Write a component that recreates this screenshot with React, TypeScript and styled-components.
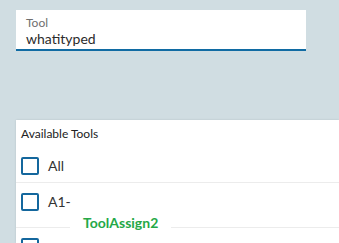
import React from "react";
import styled, { createGlobalStyle } from "styled-components";

const Global = createGlobalStyle`
  html, body { margin: 0; padding: 0; }
  body {
    background: #d0dde2;
    font-family: Lato, "Open Sans", sans-serif;
    overflow: hidden;
  }
`;

const Page = styled.div`
  display: flex;
  flex-direction: column;
  padding-top: 10px;
  padding-left: 16px;
  height: 243px;
  box-sizing: border-box;
  overflow: hidden;
`;

const Field = styled.div`
  width: 290px;
  box-sizing: border-box;
  background: #ffffff;
  border-bottom: 2px solid #106ba3;
  padding: 6px 10px 2px;
  display: flex;
  flex-direction: column;
`;

const FieldLabel = styled.span`
  font-size: 12px;
  line-height: 14px;
  color: #6f6f6f;
`;

const FieldValue = styled.span`
  font-size: 14px;
  line-height: 17px;
  color: #2b2b2b;
`;

const Panel = styled.div`
  margin-top: 69px;
  background: #ffffff;
  box-shadow: 0 0 2px rgba(0, 0, 0, 0.12);
  flex: 1;
  min-height: 0;
  overflow: hidden;
  display: flex;
  flex-direction: column;
`;

const PanelTitle = styled.div`
  font-size: 12px;
  line-height: 16px;
  color: #222;
  padding: 6px 5px 0;
`;

const Row = styled.div<{ $top: number; $bottom: number }>`
  display: flex;
  align-items: center;
  gap: 9px;
  flex-shrink: 0;
  padding: ${(p) => p.$top}px 5px ${(p) => p.$bottom}px;
  border-bottom: 1px solid #ececec;
  font-size: 14px;
  line-height: 18px;
  color: #333;
`;

const Box = styled.span`
  width: 18px;
  height: 18px;
  box-sizing: border-box;
  border: 2px solid #14679d;
  border-radius: 2px;
  flex-shrink: 0;
`;

const Watermark = styled.div`
  position: fixed;
  left: 70px;
  bottom: 0;
  background: #ffffff;
  padding: 6px 13px 12px;
  font-size: 14px;
  line-height: 17px;
  font-weight: 700;
  color: #25a847;
`;

export default function App() {
  return (
    <>
      <Global />
      <Page>
        <Field>
          <FieldLabel>Tool</FieldLabel>
          <FieldValue>whatityped</FieldValue>
        </Field>
        <Panel>
          <PanelTitle>Available Tools</PanelTitle>
          <Row $top={15} $bottom={7}>
            <Box />
            <span>All</span>
          </Row>
          <Row $top={10} $bottom={16}>
            <Box />
            <span>A1-</span>
          </Row>
          <Row $top={10} $bottom={16}>
            <Box />
            <span></span>
          </Row>
        </Panel>
      </Page>
      <Watermark>ToolAssign2</Watermark>
    </>
  );
}
